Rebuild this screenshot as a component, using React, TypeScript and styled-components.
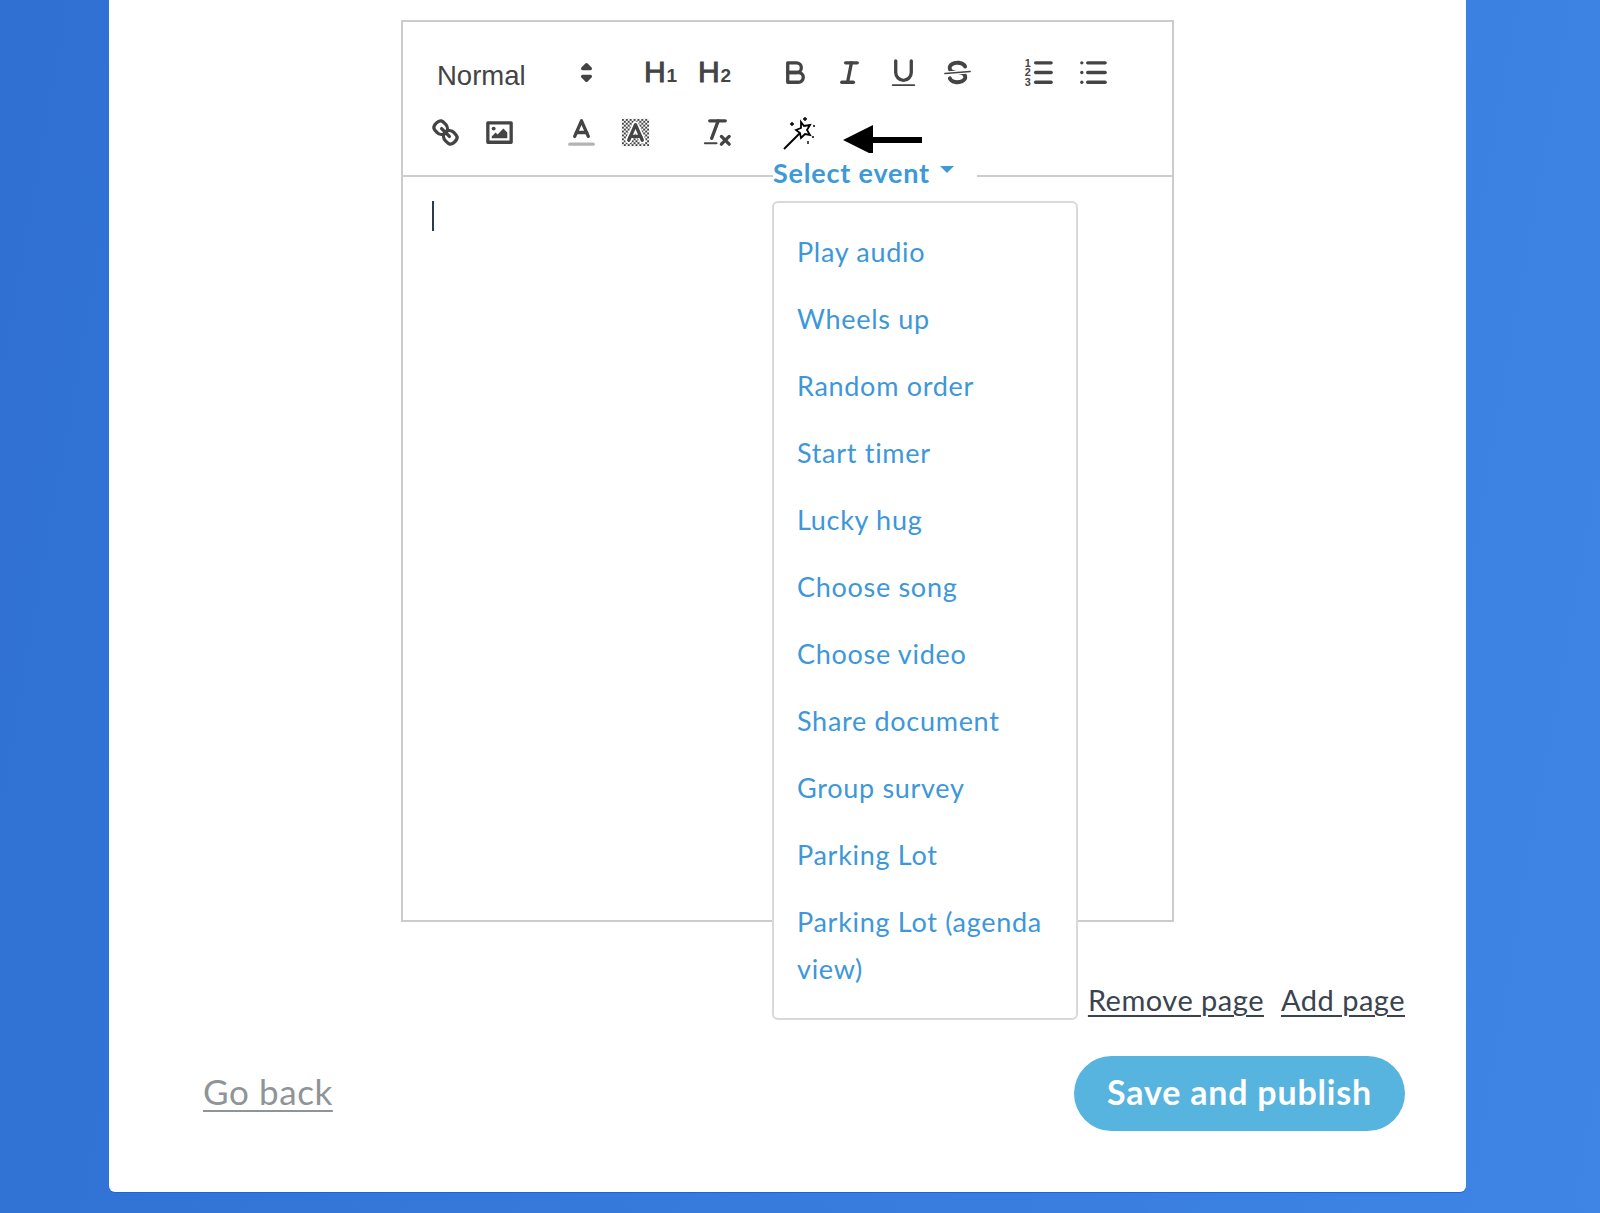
import React from "react";
import styled, { createGlobalStyle } from "styled-components";

const GlobalStyle = createGlobalStyle`
  html, body { margin: 0; padding: 0; height: 100%; }
  body {
    height: 1213px;
    overflow: hidden;
    background: linear-gradient(100deg, #2f70d2 0%, #3e85e5 100%);
    font-family: "Lato", "Liberation Sans", sans-serif;
  }
`;

const Page = styled.div`
  width: 1600px;
  height: 1213px;
  padding-left: 109px;
  box-sizing: border-box;
`;

const Card = styled.main`
  width: 1357px;
  height: 1192px;
  box-sizing: border-box;
  background: #fff;
  border-radius: 0 0 6px 6px;
  box-shadow: 0 1px 0 #0f6cd4;
  padding: 20px 61px 0 94px;
`;

const Editor = styled.section`
  position: relative;
  width: 773px;
  height: 902px;
  margin-left: 198px;
  box-sizing: border-box;
  border: 2px solid #ccc;
`;

const Toolbar = styled.div`
  box-sizing: border-box;
  height: 155px;
  padding: 20px 0 0 15px;
  border-bottom: 2px solid #ccc;
`;

const ToolRow = styled.div`
  display: flex;
  height: 60px;
  gap: 28px;
`;

const Group = styled.div`
  display: flex;
`;

const Picker = styled.div`
  display: flex;
  align-items: center;
  justify-content: space-between;
  width: 186px;
  height: 60px;
  padding-left: 19px;
  box-sizing: border-box;
  font-family: "Liberation Sans", Arial, sans-serif;
  font-size: 27.5px;
  color: #444;
  padding-top: 8px;
  svg { margin: -8px 0 0; }
`;

const ToolButton = styled.button`
  display: flex;
  align-items: center;
  justify-content: center;
  width: 54px;
  height: 60px;
  padding: 0;
  border: 0;
  background: none;
  color: #444;
  font-family: "Liberation Sans", Arial, sans-serif;
`;

const Heading = styled.span`
  margin-left: 3px;
  font-size: 30px;
  font-weight: 400;
  -webkit-text-stroke: 1px #444;
  sub {
    font-size: 19px;
    font-weight: 700;
    vertical-align: baseline;
    margin-left: 1px;
    -webkit-text-stroke: 0;
  }
`;

const Icon = styled.svg`
  width: 35px;
  height: 35px;
  fill: none;
  stroke: #444;
  stroke-width: 1.7;
  stroke-linecap: round;
  stroke-linejoin: round;
  .thin { stroke-width: 0.8; }
  .solid { fill: #444; stroke: none; }
  .label { stroke: #b3b3b3; }
  text { fill: #444; stroke: none; font: 700 5.6px "Liberation Sans", sans-serif; }
`;

const Wand = styled.svg`
  width: 36px;
  height: 36px;
  fill: none;
  stroke: #000;
`;

const PointerArrow = styled.svg`
  position: absolute;
  left: 440px;
  top: 102px;
  width: 80px;
  height: 32px;
`;

const SelectEvent = styled.div`
  position: absolute;
  left: 370px;
  top: 131px;
  width: 204px;
  height: 38px;
  display: flex;
  align-items: center;
  gap: 10px;
  background: #fff;
  color: #3d9ad9;
  font-size: 27px;
  font-weight: 700;
  letter-spacing: 0.8px;
  &::after {
    content: "";
    border-left: 7px solid transparent;
    border-right: 7px solid transparent;
    border-top: 7px solid #3d9ad9;
    margin-top: -5px;
  }
`;

const Menu = styled.ul`
  position: absolute;
  left: 369px;
  top: 179px;
  width: 306px;
  height: 819px;
  box-sizing: border-box;
  margin: 0;
  padding: 15px 23px 0 23px;
  list-style: none;
  background: #fff;
  border: 2px solid #d9d9d9;
  border-radius: 6px;
  z-index: 2;
`;

const MenuItem = styled.li`
  padding: 10px 0;
  font-size: 27px;
  line-height: 47px;
  letter-spacing: 0.7px;
  color: #3d97d8;
`;

const Caret = styled.div`
  width: 2px;
  height: 30px;
  margin: 24px 0 0 29px;
  background: #2d3a4a;
`;

const PageActions = styled.div`
  display: flex;
  justify-content: flex-end;
  gap: 17px;
  margin-top: 58px;
  font-size: 29px;
  line-height: 40px;
  letter-spacing: 0.5px;
`;

const PageLink = styled.a`
  color: #3a4350;
  text-decoration: underline;
  text-underline-offset: 4px;
  text-decoration-thickness: 2px;
`;

const Footer = styled.footer`
  display: flex;
  justify-content: space-between;
  align-items: center;
  margin-top: 36px;
`;

const BackLink = styled.a`
  padding-bottom: 6px;
  color: #8f9498;
  font-size: 35px;
  letter-spacing: 0.6px;
  text-decoration: underline;
  text-underline-offset: 5px;
  text-decoration-thickness: 2px;
`;

const PublishButton = styled.button`
  width: 331px;
  height: 75px;
  padding: 0 0 4px;
  border: 0;
  border-radius: 38px;
  background: #56b4de;
  color: #fff;
  font-family: inherit;
  font-size: 34px;
  font-weight: 700;
  letter-spacing: 0.8px;
`;

const events = [
  "Play audio",
  "Wheels up",
  "Random order",
  "Start timer",
  "Lucky hug",
  "Choose song",
  "Choose video",
  "Share document",
  "Group survey",
  "Parking Lot",
  "Parking Lot (agenda view)",
];

const App = () => (
  <Page>
    <GlobalStyle />
    <Card>
      <Editor>
        <Toolbar>
          <ToolRow>
            <Picker>
              Normal
              <Icon viewBox="0 0 18 18">
                <polygon points="7 11 9 13 11 11 7 11" className="solid" style={{ stroke: "#444" }} />
                <polygon points="7 7 9 5 11 7 7 7" className="solid" style={{ stroke: "#444" }} />
              </Icon>
            </Picker>
            <Group>
              <ToolButton><Heading>H<sub>1</sub></Heading></ToolButton>
              <ToolButton><Heading>H<sub>2</sub></Heading></ToolButton>
            </Group>
            <Group>
              <ToolButton>
                <Icon viewBox="0 0 18 18">
                  <path d="M5,4H9.5A2.5,2.5,0,0,1,12,6.5v0A2.5,2.5,0,0,1,9.5,9H5A0,0,0,0,1,5,9V4A0,0,0,0,1,5,4Z" />
                  <path d="M5,9h5.5A2.5,2.5,0,0,1,13,11.5v0A2.5,2.5,0,0,1,10.5,14H5a0,0,0,0,1,0,0V9A0,0,0,0,1,5,9Z" />
                </Icon>
              </ToolButton>
              <ToolButton>
                <Icon viewBox="0 0 18 18">
                  <line x1="7" x2="13" y1="4" y2="4" />
                  <line x1="5" x2="11" y1="14" y2="14" />
                  <line x1="8" x2="10" y1="14" y2="4" />
                </Icon>
              </ToolButton>
              <ToolButton>
                <Icon viewBox="0 0 18 18">
                  <path d="M5,3V9a4.012,4.012,0,0,0,4,4H9a4.012,4.012,0,0,0,4-4V3" />
                  <rect className="solid" height="1" rx="0.5" width="12" x="3" y="15" />
                </Icon>
              </ToolButton>
              <ToolButton>
                <Icon viewBox="0 0 18 18">
                  <line className="thin" x1="15.5" x2="2.5" y1="8.5" y2="9.5" />
                  <path className="solid" d="M9.007,8C6.542,7.791,6,7.519,6,6.5,6,5.792,7.283,5,9,5c1.571,0,2.765.679,2.969,1.309a1,1,0,0,0,1.9-.617C13.356,4.106,11.354,3,9,3,6.2,3,4,4.538,4,6.5a3.2,3.2,0,0,0,.5,1.843Z" />
                  <path className="solid" d="M8.984,10C11.457,10.208,12,10.479,12,11.5c0,.708-1.283,1.5-3,1.5-1.571,0-2.765-.679-2.969-1.309a1,1,0,1,0-1.9.617C4.644,13.894,6.646,15,9,15c2.8,0,5-1.538,5-3.5a3.2,3.2,0,0,0-.5-1.843Z" />
                </Icon>
              </ToolButton>
            </Group>
            <Group>
              <ToolButton>
                <Icon viewBox="0 0 18 18">
                  <line x1="7" x2="15" y1="4" y2="4" />
                  <line x1="7" x2="15" y1="9" y2="9" />
                  <line x1="7" x2="15" y1="14" y2="14" />
                  <text x="3" y="6" textAnchor="middle">1</text>
                  <text x="3" y="11" textAnchor="middle">2</text>
                  <text x="3" y="16" textAnchor="middle">3</text>
                </Icon>
              </ToolButton>
              <ToolButton>
                <Icon viewBox="0 0 18 18">
                  <line x1="6" x2="15" y1="4" y2="4" />
                  <line x1="6" x2="15" y1="9" y2="9" />
                  <line x1="6" x2="15" y1="14" y2="14" />
                  <line x1="3" x2="3" y1="4" y2="4" />
                  <line x1="3" x2="3" y1="9" y2="9" />
                  <line x1="3" x2="3" y1="14" y2="14" />
                </Icon>
              </ToolButton>
            </Group>
          </ToolRow>
          <ToolRow>
            <Group>
              <ToolButton>
                <Icon viewBox="0 0 18 18">
                  <line x1="7" x2="11" y1="7" y2="11" />
                  <path d="M8.9,4.577a3.476,3.476,0,0,1,.36,4.679A3.476,3.476,0,0,1,4.577,8.9C3.185,7.5,2.035,6.4,4.217,4.217S7.5,3.185,8.9,4.577Z" />
                  <path d="M13.423,9.1a3.476,3.476,0,0,0-4.679-.36,3.476,3.476,0,0,0,.36,4.679c1.392,1.392,2.5,2.542,4.679.36S14.815,10.5,13.423,9.1Z" />
                </Icon>
              </ToolButton>
              <ToolButton>
                <Icon viewBox="0 0 18 18">
                  <rect height="10" width="12" x="3" y="4" />
                  <circle className="solid" cx="6" cy="7" r="1" />
                  <polyline className="solid" points="5 12 5 11 7 9 8 10 11 7 13 9 13 12 5 12" />
                </Icon>
              </ToolButton>
            </Group>
            <Group>
              <ToolButton>
                <Icon viewBox="0 0 18 18">
                  <line className="label" x1="3" x2="15" y1="15" y2="15" />
                  <polyline points="5.5 11 9 3 12.5 11" />
                  <line x1="11.63" x2="6.38" y1="9" y2="9" />
                </Icon>
              </ToolButton>
              <ToolButton>
                <Icon viewBox="0 0 18 18">
                  <defs>
                    <pattern id="dither" width="2" height="2" patternUnits="userSpaceOnUse">
                      <rect width="1" height="1" fill="#444" stroke="none" />
                      <rect x="1" y="1" width="1" height="1" fill="#444" stroke="none" />
                    </pattern>
                  </defs>
                  <rect x="2" y="2" width="14" height="14" fill="url(#dither)" stroke="none" />
                  <polyline points="5.5 13 9 5 12.5 13" style={{ stroke: "#fff", strokeWidth: 3.4 }} />
                  <polyline points="5.5 13 9 5 12.5 13" />
                  <line x1="11.63" x2="6.38" y1="11" y2="11" />
                </Icon>
              </ToolButton>
            </Group>
            <Group>
              <ToolButton>
                <Icon viewBox="0 0 18 18">
                  <line x1="5" x2="13" y1="3" y2="3" />
                  <line x1="6" x2="9.35" y1="12" y2="3" />
                  <line x1="11" x2="15" y1="11" y2="15" />
                  <line x1="15" x2="11" y1="11" y2="15" />
                  <rect className="solid" height="1" rx="0.5" width="7" x="2" y="14" />
                </Icon>
              </ToolButton>
            </Group>
            <Group>
              <ToolButton>
                <Wand viewBox="0 0 36 36">
                  <path d="M3 35 L19 19" strokeWidth="2" />
                  <path d="M20 8 L23 12 L29 11 L26 16 L29 21 L24 20 L20 24 L19 19 L15 16 L20 14 Z" strokeWidth="1.8" fill="#fff" />
                  <path d="M11 8v4M9 10h4M24 3v4M22 5h4M32 12h2M27 27v3M31 23h2" strokeWidth="1.4" />
                </Wand>
              </ToolButton>
            </Group>
          </ToolRow>
        </Toolbar>
        <PointerArrow viewBox="0 0 80 32">
          <path d="M0 16 L30 1 V13 H79 V19 H30 V31 Z" fill="#000" />
        </PointerArrow>
        <SelectEvent>Select event</SelectEvent>
        <Menu>
          {events.map((name) => (
            <MenuItem key={name}>{name}</MenuItem>
          ))}
        </Menu>
        <Caret />
      </Editor>
      <PageActions>
        <PageLink>Remove page</PageLink>
        <PageLink>Add page</PageLink>
      </PageActions>
      <Footer>
        <BackLink>Go back</BackLink>
        <PublishButton>Save and publish</PublishButton>
      </Footer>
    </Card>
  </Page>
);

export default App;
